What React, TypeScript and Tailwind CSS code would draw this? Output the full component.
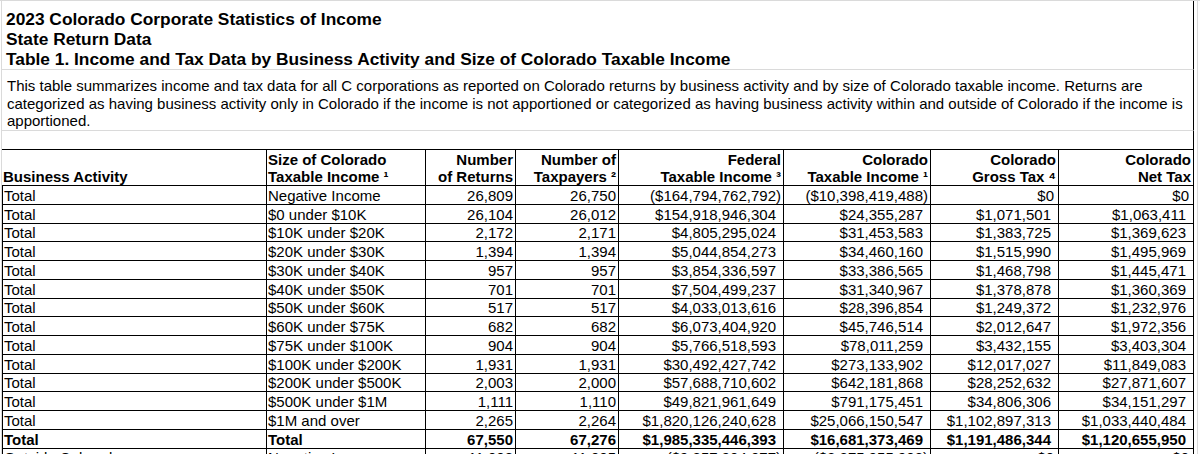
import React from "react";

type Row = { label: string; size: string; vals: string[]; bold?: boolean };

const rows: Row[] = [
  { label: "Total", size: "Negative Income", vals: ["26,809", "26,750", "($164,794,762,792)", "($10,398,419,488)", "$0", "$0"] },
  { label: "Total", size: "$0 under $10K", vals: ["26,104", "26,012", "$154,918,946,304", "$24,355,287", "$1,071,501", "$1,063,411"] },
  { label: "Total", size: "$10K under $20K", vals: ["2,172", "2,171", "$4,805,295,024", "$31,453,583", "$1,383,725", "$1,369,623"] },
  { label: "Total", size: "$20K under $30K", vals: ["1,394", "1,394", "$5,044,854,273", "$34,460,160", "$1,515,990", "$1,495,969"] },
  { label: "Total", size: "$30K under $40K", vals: ["957", "957", "$3,854,336,597", "$33,386,565", "$1,468,798", "$1,445,471"] },
  { label: "Total", size: "$40K under $50K", vals: ["701", "701", "$7,504,499,237", "$31,340,967", "$1,378,878", "$1,360,369"] },
  { label: "Total", size: "$50K under $60K", vals: ["517", "517", "$4,033,013,616", "$28,396,854", "$1,249,372", "$1,232,976"] },
  { label: "Total", size: "$60K under $75K", vals: ["682", "682", "$6,073,404,920", "$45,746,514", "$2,012,647", "$1,972,356"] },
  { label: "Total", size: "$75K under $100K", vals: ["904", "904", "$5,766,518,593", "$78,011,259", "$3,432,155", "$3,403,304"] },
  { label: "Total", size: "$100K under $200K", vals: ["1,931", "1,931", "$30,492,427,742", "$273,133,902", "$12,017,027", "$11,849,083"] },
  { label: "Total", size: "$200K under $500K", vals: ["2,003", "2,000", "$57,688,710,602", "$642,181,868", "$28,252,632", "$27,871,607"] },
  { label: "Total", size: "$500K under $1M", vals: ["1,111", "1,110", "$49,821,961,649", "$791,175,451", "$34,806,306", "$34,151,297"] },
  { label: "Total", size: "$1M and over", vals: ["2,265", "2,264", "$1,820,126,240,628", "$25,066,150,547", "$1,102,897,313", "$1,033,440,484"] },
  { label: "Total", size: "Total", vals: ["67,550", "67,276", "$1,985,335,446,393", "$16,681,373,469", "$1,191,486,344", "$1,120,655,950"], bold: true },
  { label: "Outside Colorado", size: "Negative Income", vals: ["11,008", "11,005", "($9,357,904,077)", "($2,375,955,903)", "$0", "$0"] },
];

function padFor(v: string, idx: number): string {
  if (idx < 2) return "pr-[2px]";
  if (v.startsWith("(")) return "pr-[2px]";
  if (v === "$0") return "pr-[4px]";
  return "pr-[7px]";
}

const headers: string[][] = [
  ["Number", "of Returns"],
  ["Number of", "Taxpayers ²"],
  ["Federal", "Taxable Income ³"],
  ["Colorado", "Taxable Income ¹"],
  ["Colorado", "Gross Tax ⁴"],
  ["Colorado", "Net Tax"],
];

const COLS = "grid grid-cols-[265px_159px_90px_103px_165px_147px_128px_135px]";

export default function App() {
  return (
    <div className="w-[1200px] h-[454px] overflow-hidden bg-white text-black font-['Liberation_Sans',Arial,sans-serif] border-t border-[#dadada]">
      <div className="flex h-full pl-[1px]">
        <div className="w-[1193px] shrink-0 border-l border-[#dadada]">
          {/* Title */}
          <div className="h-[69px] pt-[8px] pl-[4px] border-b border-b-[#dadada] border-r border-r-black text-[17.33px] leading-[20px] font-bold whitespace-nowrap">
            <div>2023 Colorado Corporate Statistics of Income</div>
            <div>State Return Data</div>
            <div>Table 1. Income and Tax Data by Business Activity and Size of Colorado Taxable Income</div>
          </div>
          {/* Description */}
          <div className="h-[61px] pt-[7px] pl-[5px] border-b border-b-[#dadada] border-r border-r-black text-[15px] leading-[17.5px] whitespace-nowrap">
            <div>This table summarizes income and tax data for all C corporations as reported on Colorado returns by business activity and by size of Colorado taxable income. Returns are</div>
            <div>categorized as having business activity only in Colorado if the income is not apportioned or categorized as having business activity within and outside of Colorado if the income is</div>
            <div>apportioned.</div>
          </div>
          {/* Empty row */}
          <div className="h-[18px] border-r border-r-black" />
          {/* Header */}
          <div className={`${COLS} h-[37px] text-[15px] leading-[17px] whitespace-nowrap font-bold`}>
            <div className="border-t border-b border-r border-black flex items-end pl-[1px]">
              Business Activity
            </div>
            <div className="border-t border-b border-r border-black flex items-end pl-[1px]">
              <div>
                <div>Size of Colorado</div>
                <div>Taxable Income ¹</div>
              </div>
            </div>
            {headers.map((h, i) => (
              <div
                key={i}
                className="border-t border-b border-r border-black flex items-end justify-end pr-[2px] text-right"
              >
                <div>
                  <div>{h[0]}</div>
                  <div>{h[1]}</div>
                </div>
              </div>
            ))}
          </div>
          {/* Body */}
          <div className={`${COLS} auto-rows-[18.75px] text-[15px] leading-[17px] whitespace-nowrap`}>
            {rows.map((r, ri) => (
              <React.Fragment key={ri}>
                <div className={`border-l border-r border-b border-black flex items-end pl-[1px] ${r.bold ? "font-bold" : ""}`}>
                  {r.label}
                </div>
                <div className={`border-r border-b border-black flex items-end pl-[1px] ${r.bold ? "font-bold" : ""}`}>
                  {r.size}
                </div>
                {r.vals.map((v, vi) => (
                  <div
                    key={vi}
                    className={`border-r border-b border-black flex items-end justify-end ${padFor(v, vi)} ${r.bold ? "font-bold" : ""}`}
                  >
                    {v}
                  </div>
                ))}
              </React.Fragment>
            ))}
          </div>
        </div>
        <div className="ml-[3px] h-full border-l border-[#dadada]" />
      </div>
    </div>
  );
}
